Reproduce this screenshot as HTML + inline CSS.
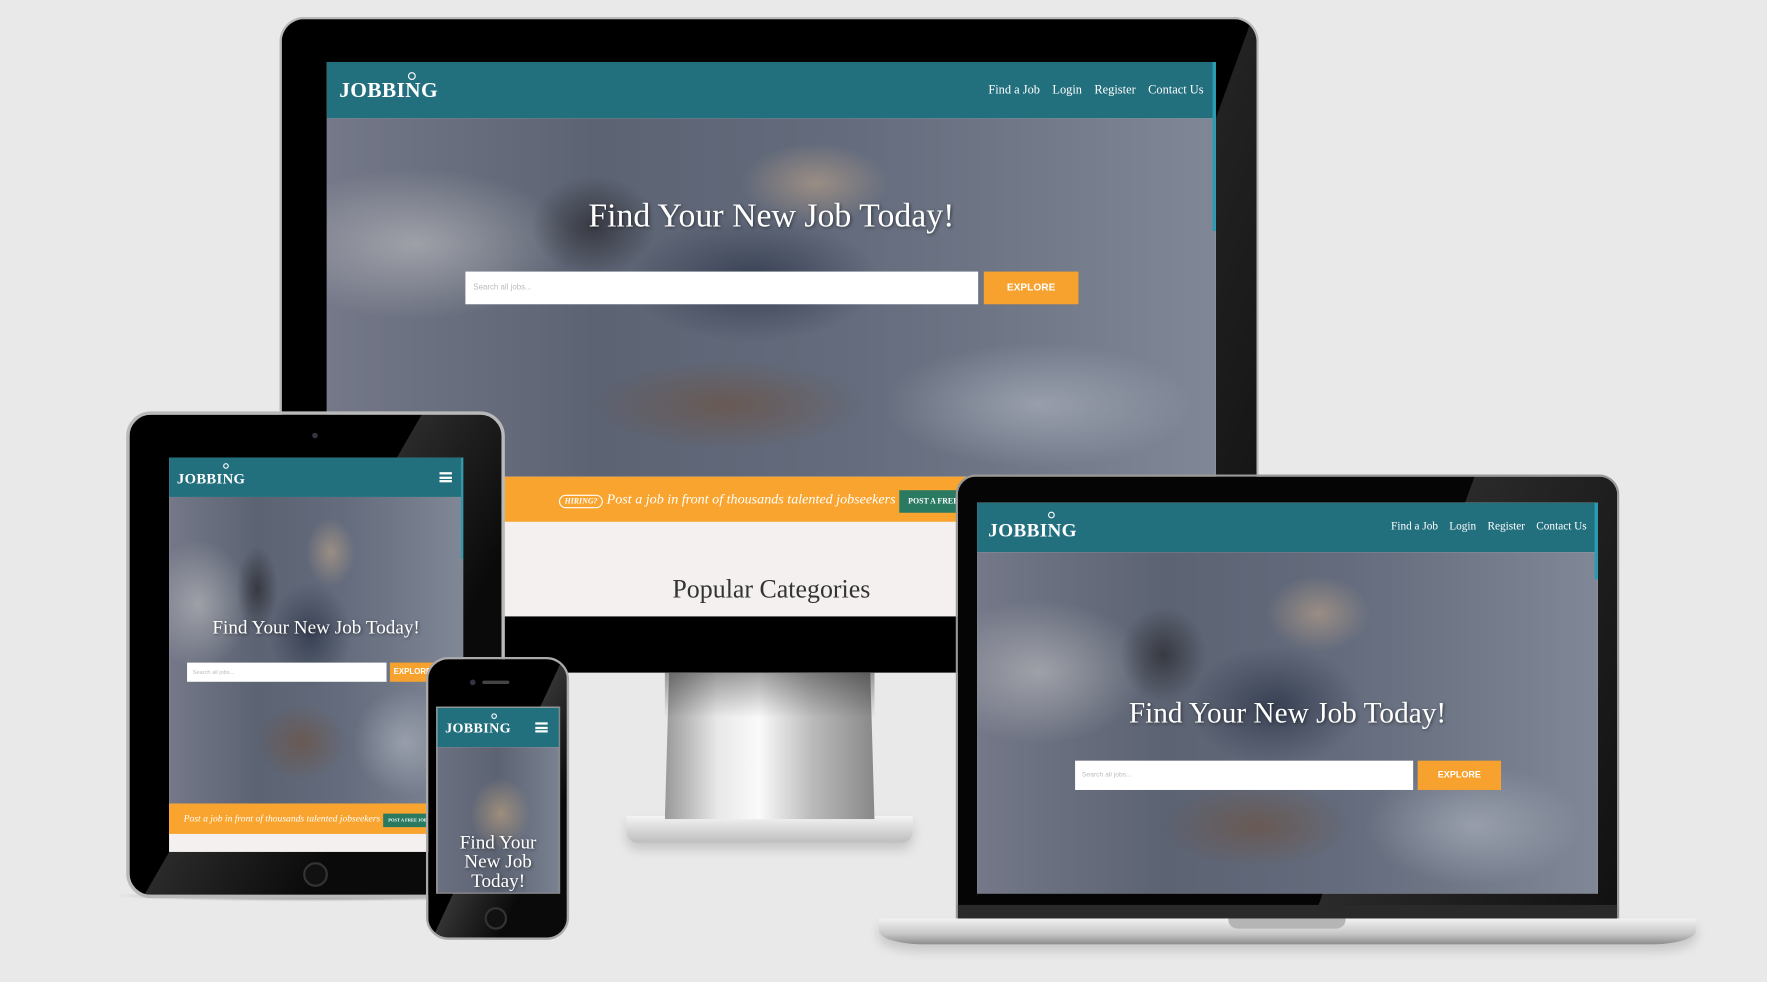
<!DOCTYPE html>
<html><head><meta charset="utf-8"><style>
*{margin:0;padding:0;box-sizing:border-box}
html,body{width:1767px;height:982px;overflow:hidden;background:#e9e9e9}
#w{position:absolute;left:0;top:0;width:1568px;height:871px;transform:scale(1.12691);transform-origin:0 0;font-family:"Liberation Serif",serif}
.a{position:absolute}
.bez{background:#050505;border:2px solid #b9b9b9}
.scr{position:absolute;overflow:hidden;background:#f5f0f0}
.nav{position:absolute;left:0;right:0;top:0;background:#226f7e;color:#fff}
.logo{position:absolute;font-weight:bold;color:#fff;letter-spacing:.3px}
.logo i{position:absolute;width:7px;height:7px;border:1.5px solid #fff;border-radius:50%}
.hero{position:absolute;left:0;right:0;background:
radial-gradient(ellipse 12% 16% at 55% 18%,rgba(200,170,140,.55),transparent 70%),
radial-gradient(ellipse 10% 20% at 30% 30%,rgba(40,40,45,.7),transparent 70%),
radial-gradient(ellipse 20% 25% at 48% 45%,rgba(30,40,60,.6),transparent 70%),
radial-gradient(ellipse 22% 18% at 45% 80%,rgba(110,80,60,.6),transparent 70%),
radial-gradient(ellipse 25% 30% at 10% 35%,rgba(200,200,200,.55),transparent 70%),
radial-gradient(ellipse 25% 25% at 80% 80%,rgba(190,195,205,.5),transparent 70%),
linear-gradient(90deg,#747888,#5c6373 30%,#646c7d 60%,#808796)}
.h1{position:absolute;left:0;right:0;text-align:center;color:#fff;text-shadow:1px 1px 3px rgba(0,0,0,.5)}
.inp{position:absolute;background:#fff;color:#bbb;font-family:"Liberation Sans",sans-serif}
.btn{position:absolute;background:#f7a22e;color:#fff;font-family:"Liberation Sans",sans-serif;font-weight:bold;text-align:center}
.or{position:absolute;left:0;right:0;background:#f9a42f;color:#fff;font-style:italic;white-space:nowrap;overflow:hidden}
.gb{display:inline-block;background:#2a7a62;color:#fff;font-style:normal;font-weight:bold}
</style></head><body><div id="w">

<!-- monitor -->
<div class="a" style="left:556px;top:724px;width:254px;height:24px;border-radius:0 0 10px 10px;background:linear-gradient(#f4f4f4,#bdbdbd);box-shadow:0 6px 10px rgba(0,0,0,.15)"></div>
<div class="a" style="left:590px;top:597px;width:186px;height:130px;background:linear-gradient(90deg,#999,#e8e8e8 25%,#fafafa 45%,#bbb 70%,#888);clip-path:polygon(2% 0,98% 0,100% 100%,0 100%)"></div>
<div class="a" style="left:590px;top:597px;width:186px;height:40px;background:linear-gradient(rgba(0,0,0,.35),transparent)"></div>
<div class="a bez" style="left:248px;top:15px;width:869px;height:582px;border-radius:22px 22px 0 0;border-bottom:none;background:linear-gradient(110deg,#000 80%,#222 80%,#111)"></div>
<div class="scr" style="left:290px;top:55px;width:789px;height:492px">
 <div class="nav" style="height:50px"><div class="logo" style="left:11px;top:15px;font-size:19px">JOBBING<i style="left:61px;top:-6px"></i></div>
 <div class="a" style="right:11px;top:19px;font-size:11px;word-spacing:0">Find a Job&nbsp;&nbsp;&nbsp; Login&nbsp;&nbsp;&nbsp; Register&nbsp;&nbsp;&nbsp; Contact Us</div></div>
 <div class="hero" style="top:50px;height:318px"></div>
 <div class="h1" style="top:120px;font-size:30px">Find Your New Job Today!</div>
 <div class="inp" style="left:123px;top:186px;width:455px;height:29px;font-size:7px;padding:11px 7px">Search all jobs...</div>
 <div class="btn" style="left:583px;top:186px;width:84px;height:29px;font-size:9px;line-height:29px">EXPLORE</div>
 <div class="or" style="top:368px;height:40px;font-size:12.5px;line-height:40px;padding-left:206px"><span style="font-size:7px;border:1px solid #fff;border-radius:8px;padding:1px 4px;font-weight:bold">HIRING?</span> Post a job in front of thousands talented jobseekers <span class="gb" style="font-size:7px;padding:0 8px;line-height:20px">POST A FREE JOB</span></div>
 <div class="a" style="left:0;right:0;top:455px;text-align:center;font-size:23px;color:#333">Popular Categories</div>
 <div class="a" style="right:0;top:0;width:3px;height:150px;background:#2a9bb0"></div>
</div>

<!-- tablet -->
<div class="a" style="left:100px;top:790px;width:360px;height:10px;background:radial-gradient(#777,transparent 70%)"></div>
<div class="a bez" style="left:112px;top:365px;width:336px;height:432px;border-radius:22px;border-width:3px;background:linear-gradient(120deg,#000 45%,#2a2a2a 45%,#0a0a0a 70%)"></div>
<div class="a" style="left:277px;top:384px;width:5px;height:5px;border-radius:50%;background:#334"></div>
<div class="a" style="left:269px;top:765px;width:22px;height:22px;border-radius:50%;border:2px solid #333;background:#111"></div>
<div class="scr" style="left:150px;top:406px;width:261px;height:350px">
 <div class="nav" style="height:35px"><div class="logo" style="left:7px;top:11px;font-size:13px">JOBBING<i style="left:41px;top:-6px;width:5px;height:5px;border-width:1px"></i></div>
 <div class="a" style="right:10px;top:13px;width:11px;height:9px;border-top:2px solid #fff;border-bottom:2px solid #fff"><div style="margin-top:1.5px;height:2px;background:#fff"></div></div></div>
 <div class="hero" style="top:35px;height:272px"></div>
 <div class="h1" style="top:141px;font-size:17px">Find Your New Job Today!</div>
 <div class="inp" style="left:16px;top:182px;width:177px;height:17px;font-size:5px;padding:6px 5px">Search all jobs...</div>
 <div class="btn" style="left:196px;top:182px;width:40px;height:17px;font-size:7px;line-height:17px">EXPLORE</div>
 <div class="or" style="top:307px;height:27px;font-size:8.5px;line-height:27px;padding-left:13px">Post a job in front of thousands talented jobseekers <span class="gb" style="font-size:4px;padding:0 5px;line-height:12px">POST A FREE JOB</span></div>
 <div class="a" style="right:0;top:0;width:2px;height:90px;background:#2a9bb0"></div>
</div>

<!-- phone -->
<div class="a" style="left:378px;top:583px;width:127px;height:251px;border-radius:20px;border:2px solid #aaa;background:linear-gradient(115deg,#000 50%,#333 50%,#0a0a0a 75%)"></div>
<div class="a" style="left:428px;top:604px;width:24px;height:3px;border-radius:2px;background:#444"></div>
<div class="a" style="left:417px;top:603px;width:5px;height:5px;border-radius:50%;background:#334"></div>
<div class="a" style="left:430px;top:805px;width:20px;height:20px;border-radius:50%;border:2px solid #333;background:#111"></div>
<div class="scr" style="left:387px;top:627px;width:110px;height:166px;border:1px solid #888">
 <div class="nav" style="height:35px"><div class="logo" style="left:7px;top:11px;font-size:12.5px">JOBBING<i style="left:41px;top:-6px;width:5px;height:5px;border-width:1px"></i></div>
 <div class="a" style="right:10px;top:13px;width:11px;height:9px;border-top:2px solid #fff;border-bottom:2px solid #fff"><div style="margin-top:1.5px;height:2px;background:#fff"></div></div></div>
 <div class="hero" style="top:35px;height:131px;background:radial-gradient(ellipse 35% 35% at 52% 45%,rgba(200,170,130,.6),transparent 70%),linear-gradient(90deg,#6b7080,#5c6373 50%,#7a8190)"></div>
 <div class="h1" style="top:111px;font-size:17px;line-height:17px">Find Your<br>New Job<br>Today!</div>
</div>

<!-- laptop -->
<div class="a" style="left:780px;top:815px;width:725px;height:23px;border-radius:0 0 40px 40px/0 0 12px 12px;background:linear-gradient(#f2f2f2,#c6c6c6 60%,#8d8d8d);box-shadow:0 6px 10px rgba(0,0,0,.15)"></div>
<div class="a" style="left:1090px;top:815px;width:104px;height:9px;border-radius:0 0 8px 8px;background:#b5b5b5"></div>
<div class="a" style="left:848px;top:421px;width:589px;height:394px;border-radius:18px 18px 0 0;border:2px solid #999;border-bottom:none;background:linear-gradient(110deg,#050505 63%,#2a2a2a 63%,#111)"></div>
<div class="a" style="left:850px;top:803px;width:585px;height:12px;background:#2a2a2a"></div>
<div class="scr" style="left:867px;top:446px;width:551px;height:347px">
 <div class="nav" style="height:44px"><div class="logo" style="left:10px;top:15px;font-size:17px">JOBBING<i style="left:53px;top:-7px;width:6px;height:6px"></i></div>
 <div class="a" style="right:10px;top:16px;font-size:10px">Find a Job&nbsp;&nbsp;&nbsp; Login&nbsp;&nbsp;&nbsp; Register&nbsp;&nbsp;&nbsp; Contact Us</div></div>
 <div class="hero" style="top:44px;height:303px"></div>
 <div class="h1" style="top:172px;font-size:26px">Find Your New Job Today!</div>
 <div class="inp" style="left:87px;top:229px;width:300px;height:26px;font-size:6px;padding:10px 6px">Search all jobs...</div>
 <div class="btn" style="left:391px;top:229px;width:74px;height:26px;font-size:8px;line-height:26px">EXPLORE</div>
 <div class="a" style="right:0;top:0;width:3px;height:68px;background:#2a9bb0"></div>
</div>

</div></body></html>
